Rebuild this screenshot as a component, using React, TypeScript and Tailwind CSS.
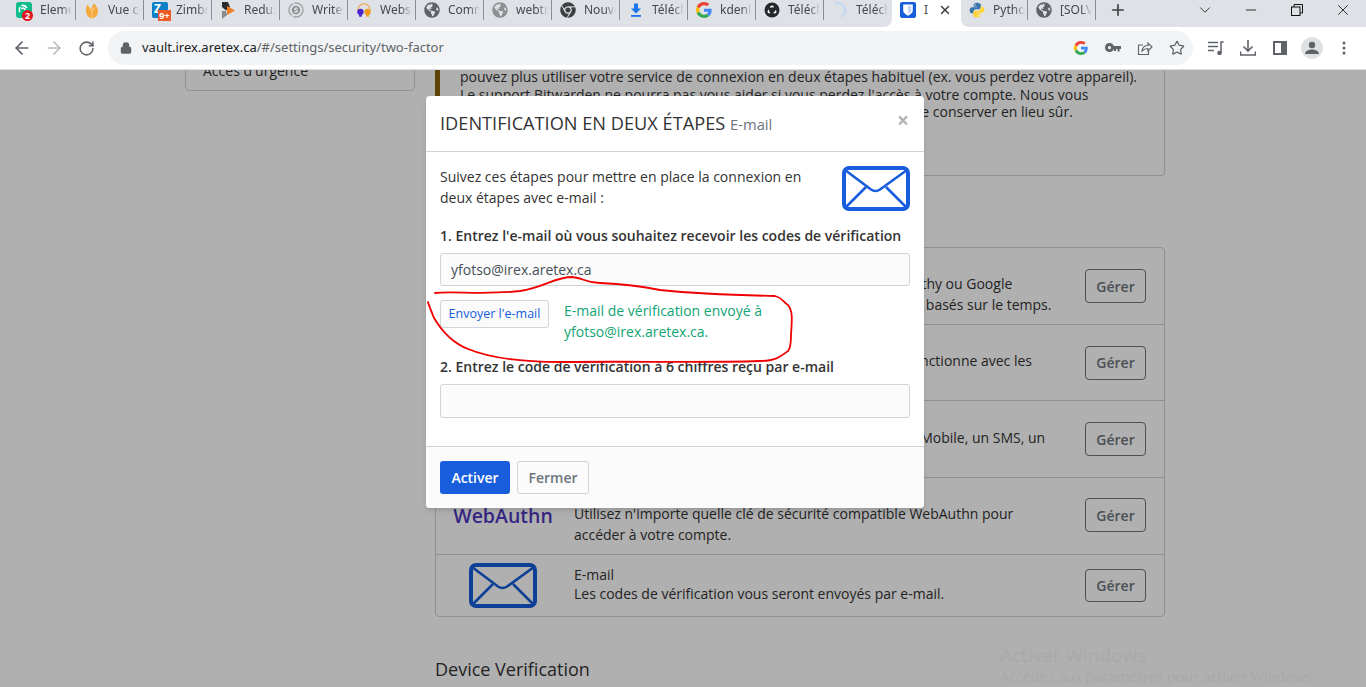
import React from 'react';
import { ArrowLeft, ArrowRight, RotateCw, Lock, Star, ChevronDown, Minus, X, Plus } from 'lucide-react';
import { FaGlobeAmericas, FaChrome } from 'react-icons/fa';

const GoogleG = ({ size = 16 }: { size?: number }) => (
  <svg width={size} height={size} viewBox="0 0 48 48">
    <path fill="#EA4335" d="M24 9.5c3.54 0 6.71 1.22 9.21 3.6l6.85-6.85C35.9 2.38 30.47 0 24 0 14.62 0 6.51 5.38 2.56 13.22l7.98 6.19C12.43 13.72 17.74 9.5 24 9.5z" />
    <path fill="#4285F4" d="M46.98 24.55c0-1.57-.15-3.09-.38-4.55H24v9.02h12.94c-.58 2.96-2.26 5.48-4.78 7.18l7.73 6c4.51-4.18 7.09-10.36 7.09-17.65z" />
    <path fill="#FBBC05" d="M10.53 28.59c-.48-1.45-.76-2.99-.76-4.59s.27-3.14.76-4.59l-7.98-6.19C.92 16.46 0 20.12 0 24c0 3.88.92 7.54 2.56 10.78l7.97-6.19z" />
    <path fill="#34A853" d="M24 48c6.48 0 11.93-2.13 15.89-5.81l-7.73-6c-2.15 1.45-4.92 2.3-8.16 2.3-6.26 0-11.57-4.22-13.47-9.91l-7.98 6.19C6.51 42.62 14.62 48 24 48z" />
  </svg>
);

const ElementIcon = () => (
  <div className="relative w-4 h-4 rounded-[3px] bg-[#0dbd8b]">
    <svg width="16" height="16" viewBox="0 0 16 16" fill="none" stroke="white" strokeWidth="1.6" strokeLinecap="round">
      <path d="M6 3.5a4.5 4.5 0 0 1 4.5 2" />
      <path d="M3.5 9.5a4.5 4.5 0 0 1 .5-4" />
      <path d="M6 6.5a2 2 0 0 1 3 1" />
    </svg>
    <span className="absolute -right-[1px] -bottom-[3px] w-[11px] h-[11px] rounded-full bg-[#e0171f] text-white text-[9px] font-bold leading-[11px] text-center">2</span>
  </div>
);

const VueIcon = () => (
  <svg width="14" height="17" viewBox="0 0 14 17">
    <path fill="#f5a93b" d="M7 16.500C2.500 15.500 1 12 1 8c0-2 .5-4 1.500-5.500C4 4 5 5.500 6 8c.5-2.500 1.500-4.500 3-6.500 2 2 4 4.500 4 7.500 0 4-2 6.500-6 7.500z" />
    <path fill="none" stroke="#fbd59a" strokeWidth=".8" d="M7 16V10M7 10C6.500 8 5 6 3.500 5M7 10c.5-2 2-4 3-5" />
  </svg>
);

const ZimbraIcon = () => (
  <div className="relative w-4 h-4 rounded-[2px] bg-[#0b7fc7] text-white text-[12px] font-bold leading-[14px] pl-[2px]">
    Z
    <span className="absolute -right-[3px] -bottom-[3px] w-[13px] h-[11px] bg-[#ee5a24] text-white text-[9px] font-bold leading-[11px] text-center">9+</span>
  </div>
);

const ReduIcon = () => (
  <svg width="13" height="17" viewBox="0 0 13 17">
    <path fill="#2b2b2b" d="M0 0h6l2 5-4 3.500L0 5z" />
    <path fill="#8a8a8a" d="M0 17V9l4 0 1 4z" />
    <path fill="#ef7d22" d="M5 4l8 4.500L5 13z" />
  </svg>
);

const WriteIcon = () => (
  <svg width="16" height="16" viewBox="0 0 16 16" fill="none">
    <circle cx="8" cy="8" r="7" stroke="#a0a3a6" strokeWidth="1.400" strokeDasharray="14 1.500" />
    <circle cx="8" cy="8" r="4.200" fill="#8d9093" />
    <path d="M9.800 6.500C9 5.700 6.500 5.800 6.500 7s3.200 1 3.200 2.200-2.600 1.200-3.500.4" stroke="white" strokeWidth="1" />
  </svg>
);

const WebsIcon = () => (
  <svg width="18" height="15" viewBox="0 0 18 15">
    <path d="M2 7a4 4 0 0 1 14 0" fill="none" stroke="#f2a33a" strokeWidth="1.200" />
    <circle cx="5" cy="9" r="3.600" fill="#4a22c9" />
    <rect x="3.500" y="11.500" width="3" height="3" fill="#4a22c9" />
    <circle cx="13" cy="9" r="3.600" fill="#f39a1d" />
    <rect x="11.500" y="11.500" width="3" height="3" fill="#f39a1d" />
  </svg>
);

const DownloadBlue = () => (
  <svg width="16" height="16" viewBox="0 0 16 16" fill="#1a73e8">
    <path d="M6 1.500h4v5h3L8 11.500 3 6.500h3z" />
    <rect x="3" y="13" width="10" height="1.800" />
  </svg>
);

const ObsIcon = () => (
  <svg width="16" height="16" viewBox="0 0 16 16">
    <circle cx="8" cy="8" r="7.500" fill="#24272b" />
    <path d="M8 3.500a2 2 0 0 1 2 2c-1.300-.6-2.600-.3-3.600.6A2 2 0 0 1 8 3.500zM3.800 10.500a2 2 0 0 1 1.300-3c-.2 1.400.3 2.600 1.400 3.400a2 2 0 0 1-2.700-.4zM12.300 10.500a2 2 0 0 1-3.300.2c1.300-.4 2.200-1.400 2.400-2.800a2 2 0 0 1 .9 2.600z" fill="white" />
  </svg>
);

const Spinner = () => (
  <svg width="16" height="16" viewBox="0 0 16 16" fill="none">
    <path d="M3 1.500a7 7 0 0 1 6 13.300" stroke="#c3d7f5" strokeWidth="2" />
  </svg>
);

const BitwardenIcon = () => (
  <svg width="16" height="16" viewBox="0 0 16 16">
    <rect width="16" height="16" rx="2" fill="#175ddc" />
    <path d="M3.200 2.500h9.600v6c0 2.500-2.600 4-4.800 5.200C5.800 12.500 3.200 11 3.200 8.500z" fill="white" />
    <path d="M8 4h3.300v4.500c0 1.500-1.700 2.700-3.300 3.500z" fill="#175ddc" opacity=".25" />
  </svg>
);

const PythonIcon = () => (
  <svg width="16" height="16" viewBox="0 0 24 24">
    <path fill="#3776ab" d="M12 1C8 1 7 2.500 7 4.500V7h5.200v1H4.500C2.300 8 1 10 1 12.500S2.300 17 4.500 17H7v-3c0-2 1.500-3.300 3.500-3.300h4.300c1.700 0 3-1.300 3-3V4.500C17.800 2.500 16 1 12 1z" />
    <path fill="#ffd43b" d="M12 23c4 0 5-1.500 5-3.500V17h-5.200v-1h7.700c2.200 0 3.500-2 3.500-4.500S21.700 7 19.500 7H17v3c0 2-1.500 3.300-3.500 3.300H9.200c-1.700 0-3 1.300-3 3v3.200C6.200 21.500 8 23 12 23z" />
    <circle cx="9.300" cy="4.300" r="1" fill="white" />
    <circle cx="14.700" cy="19.700" r="1" fill="white" />
  </svg>
);

const tabs: { icon: React.ReactNode; label: string }[] = [
  { icon: <ElementIcon />, label: 'Element' },
  { icon: <VueIcon />, label: 'Vue core' },
  { icon: <ZimbraIcon />, label: 'Zimbra' },
  { icon: <ReduIcon />, label: 'Redux' },
  { icon: <WriteIcon />, label: 'Writer' },
  { icon: <WebsIcon />, label: 'Websocket' },
  { icon: <FaGlobeAmericas size={16} color="#5f6368" />, label: 'Comment' },
  { icon: <FaGlobeAmericas size={16} color="#8d9093" />, label: 'webtrc' },
  { icon: <FaChrome size={16} color="#3c4043" />, label: 'Nouvel' },
  { icon: <DownloadBlue />, label: 'Télécharger' },
  { icon: <GoogleG />, label: 'kdenlive' },
  { icon: <ObsIcon />, label: 'Télécharger' },
  { icon: <Spinner />, label: 'Télécharger' },
];

const TabItem = ({ icon, label, last }: { icon: React.ReactNode; label: string; last?: boolean }) => (
  <div className={last ? 'bg-white' : ''}>
    <div className={`w-[68px] h-[27px] bg-[#dee1e6] ${last ? 'rounded-br-lg' : ''}`}>
      <div className={`h-5 flex items-center pl-2 ${last ? '' : 'border-r border-[#8a8d91]'}`}>
        <div className="w-4 h-4 flex items-center justify-center shrink-0">{icon}</div>
        <span className="ml-2 w-[32px] overflow-hidden whitespace-nowrap text-[12px] text-[#45494e] [mask-image:linear-gradient(to_right,black_65%,transparent)]">
          {label}
        </span>
      </div>
    </div>
  </div>
);

const ToolBtn = ({ children }: { children: React.ReactNode }) => (
  <div className="w-8 h-8 flex items-center justify-center shrink-0">{children}</div>
);

const ChromeBar = () => (
  <div className="shrink-0 font-['Noto_Sans',sans-serif]">
    {/* Tab strip */}
    <div className="h-[27px] bg-[#dee1e6] flex">
      <div className="w-2 shrink-0" />
      {tabs.map((t, i) => (
        <TabItem key={i} icon={t.icon} label={t.label} last={i === tabs.length - 1} />
      ))}
      <div className="w-[69px] h-[27px] bg-white flex items-start pt-[2px] pl-2">
        <div className="h-4 flex items-center">
          <BitwardenIcon />
          <span className="ml-2 w-[5px] overflow-hidden text-[12px] text-[#45494e]">I</span>
          <X size={14} strokeWidth={2.500} className="ml-[9px] text-[#3c4043]" />
        </div>
      </div>
      <div className="bg-white">
        <div className="w-[67px] h-[27px] bg-[#dee1e6] rounded-bl-lg">
          <div className="h-5 flex items-center pl-2 border-r border-[#8a8d91]">
            <div className="w-4 h-4 shrink-0"><PythonIcon /></div>
            <span className="ml-2 w-[32px] overflow-hidden whitespace-nowrap text-[12px] text-[#45494e] [mask-image:linear-gradient(to_right,black_65%,transparent)]">Python</span>
          </div>
        </div>
      </div>
      <TabItem icon={<FaGlobeAmericas size={16} color="#5f6368" />} label="[SOLVED]" />
      <div className="w-[44px] h-5 flex items-center justify-center">
        <Plus size={18} strokeWidth={2.200} className="text-[#3c4043]" />
      </div>
      <div className="ml-auto flex h-5">
        <div className="w-[46px] flex items-center justify-center"><ChevronDown size={18} strokeWidth={1.100} className="text-[#111]" /></div>
        <div className="w-[46px] flex items-center justify-center"><Minus size={16} strokeWidth={1.300} className="text-[#111]" /></div>
        <div className="w-[46px] flex items-center justify-center">
          <svg width="12" height="12" viewBox="0 0 12 12" fill="none" stroke="#111" strokeWidth="1">
            <rect x=".5" y="3" width="8.500" height="8.500" />
            <path d="M3 3V.5h8.500V9H9" />
          </svg>
        </div>
        <div className="w-[46px] flex items-center justify-center"><X size={18} strokeWidth={1.100} className="text-[#111]" /></div>
      </div>
    </div>
    {/* Toolbar */}
    <div className="h-[43px] bg-white border-b border-[#dadce0] flex items-center pl-[6px]">
      <ToolBtn><ArrowLeft size={20} strokeWidth={2} className="text-[#5f6368]" /></ToolBtn>
      <ToolBtn><ArrowRight size={20} strokeWidth={2} className="text-[#babcbe]" /></ToolBtn>
      <ToolBtn><RotateCw size={17} strokeWidth={2.200} className="text-[#5f6368]" /></ToolBtn>
      <div className="ml-[6px] w-[1085px] h-[34px] rounded-full bg-[#f1f3f4] flex items-center">
        <Lock size={12} strokeWidth={3} className="ml-3 text-[#5f6368] fill-[#5f6368]" />
        <span className="ml-[10px] text-[13px] text-[#202124] whitespace-nowrap">
          vault.irex.aretex.ca<span className="text-[#5f6368]">/#/settings/security/two-factor</span>
        </span>
        <div className="ml-auto flex items-center">
          <ToolBtn><GoogleG size={14} /></ToolBtn>
          <ToolBtn>
            <svg width="16" height="10" viewBox="0 0 16 10" fill="#5f6368">
              <path d="M4.500 0a4.500 4.500 0 0 1 4.300 3H16v3h-1.500v2.500h-2V6H11v2H9V6h-.2A4.500 4.500 0 1 1 4.500 0zm0 3a1.600 1.600 0 1 0 0 3.200 1.600 1.600 0 0 0 0-3.200z" />
            </svg>
          </ToolBtn>
          <ToolBtn>
            <svg width="16" height="16" viewBox="0 0 16 16" fill="none" stroke="#5f6368" strokeWidth="1.100">
              <path d="M6 5H1.500v9.500h10V11" />
              <path d="M5 11c.5-3.500 3-5.500 6-5.500V3l4 4-4 4V8.500c-2.500 0-4.500 1-6 2.500z" />
            </svg>
          </ToolBtn>
          <ToolBtn><Star size={16} strokeWidth={1.800} className="text-[#5f6368]" /></ToolBtn>
        </div>
      </div>
      <div className="ml-[7px] flex items-center">
        <ToolBtn>
          <svg width="16" height="14" viewBox="0 0 16 14" fill="none" stroke="#5f6368" strokeWidth="1.500">
            <path d="M0 1.500h10M0 5.500h10M0 9.500h6" />
            <path d="M13 12V1h2.500" />
            <circle cx="11.500" cy="12" r="1.500" fill="#5f6368" />
          </svg>
        </ToolBtn>
        <ToolBtn>
          <svg width="16" height="16" viewBox="0 0 16 16" fill="none" stroke="#5f6368" strokeWidth="1.600">
            <path d="M8 0v11M3.500 6.500 8 11l4.500-4.500" />
            <path d="M.5 11.500v3.500h15v-3.500" />
          </svg>
        </ToolBtn>
        <ToolBtn>
          <svg width="14" height="14" viewBox="0 0 14 14">
            <path fill="#5f6368" d="M0 0h14v14H0z" />
            <path fill="white" d="M2 2h6v10H2z" />
          </svg>
        </ToolBtn>
        <ToolBtn>
          <div className="w-[22px] h-[22px] rounded-full bg-[#dfe1e5] flex items-center justify-center">
            <svg width="14" height="14" viewBox="0 0 14 14" fill="#5f6368">
              <circle cx="7" cy="4" r="3.200" />
              <path d="M0 13c0-3 3.500-4.500 7-4.500s7 1.500 7 4.500z" />
            </svg>
          </div>
        </ToolBtn>
        <ToolBtn>
          <svg width="4" height="14" viewBox="0 0 4 14" fill="#5f6368">
            <circle cx="2" cy="2" r="1.500" />
            <circle cx="2" cy="7" r="1.500" />
            <circle cx="2" cy="12" r="1.500" />
          </svg>
        </ToolBtn>
      </div>
    </div>
  </div>
);

const EnvelopeIcon = () => (
  <svg width="68" height="45" viewBox="0 0 68 45" fill="none" stroke="#175ddc">
    <rect x="2" y="2" width="64" height="41" rx="5" strokeWidth="4" />
    <path d="M3 4l26 19.500c3 2 6 2 9 0L65 4" strokeWidth="2.600" />
    <path d="M3 42l21-21M65 42 44 21" strokeWidth="2.600" />
  </svg>
);

const rows: { h: string; icon: React.ReactNode; lines: string[]; leading: string; shift: string; btn: string }[] = [
  {
    h: 'h-[76px]',
    icon: null,
    leading: 'leading-[21px]',
    shift: '-mt-[6px]',
    btn: 'h-[34px]',
    lines: ['Application d\'authentification', 'Utilisez une application d\'authentification (comme Authy ou Google', 'Authenticator) pour générer des codes de vérification basés sur le temps.'],
  },
  {
    h: 'h-[76px]',
    icon: null,
    leading: 'leading-[21px]',
    shift: '-mt-[5px]',
    btn: 'h-[34px]',
    lines: ['YubiKey OTP', 'Utilisez une YubiKey pour accéder à votre compte. Fonctionne avec les', 'appareils YubiKey 4, 4 Nano, 4C et NEO.'],
  },
  {
    h: 'h-[77px]',
    icon: null,
    leading: 'leading-[21px]',
    shift: '-mt-[3px]',
    btn: 'h-[34px]',
    lines: ['Duo', 'Utilisez Duo Security pour noter via l\'application Duo Mobile, un SMS, un', 'appel téléphonique ou une clé de sécurité U2F.'],
  },
  {
    h: 'h-[77px]',
    icon: <span className="text-[19.500px] font-semibold text-[#5038c0]">WebAuthn</span>,
    leading: 'leading-[21px]',
    shift: '-mt-[6px]',
    btn: 'h-[34px] -mt-[2px]',
    lines: ['FIDO2 WebAuthn', 'Utilisez n\'importe quelle clé de sécurité compatible WebAuthn pour', 'accéder à votre compte.'],
  },
  {
    h: 'h-[62px]',
    icon: <EnvelopeIcon />,
    leading: 'leading-[19.500px]',
    shift: '-mt-[3px]',
    btn: 'h-[33px] -mt-[1px]',
    lines: ['E-mail', 'Les codes de vérification vous seront envoyés par e-mail.'],
  },
];

const PageBehind = () => (
  <div className="flex pl-[185px] gap-5 -mt-[100px] text-[14px] text-[#333] font-['Open_Sans',sans-serif]">
    {/* Sidebar */}
    <div className="w-[230px] h-[121px] border border-[#ced4da] rounded flex flex-col justify-end shrink-0">
      <div className="h-[39px] pl-[17px] pt-[9px] leading-[21px]">Accès d'urgence</div>
    </div>
    {/* Main */}
    <div className="w-[730px]">
      <div className="h-[206px] border border-[#ced4da] border-l-[5px] border-l-[#86640b] rounded pl-5 pt-[79px] leading-[18px]">
        <div className="whitespace-nowrap">Le code de récupération vous permet d'accéder à votre compte dans le cas où vous ne</div>
        <div className="whitespace-nowrap">pouvez plus utiliser votre service de connexion en deux étapes habituel (ex. vous perdez votre appareil).</div>
        <div className="whitespace-nowrap">Le support Bitwarden ne pourra pas vous aider si vous perdez l'accès à votre compte. Nous vous</div>
        <div className="whitespace-nowrap -mt-[1px]">recommandons de noter ou d'imprimer le code de récupération et de le conserver en lieu sûr.</div>
      </div>
      <div className="h-[71px] flex items-end pb-2 text-[18px]">Fournisseurs</div>
      <div className="border border-[#ced4da] rounded">
        {rows.map((r, i) => (
          <div key={i} className={`${r.h} flex items-center ${i > 0 ? 'border-t border-[#ced4da]' : ''}`}>
            <div className="w-[134px] mr-[4px] flex justify-center shrink-0">{r.icon}</div>
            <div className={`flex-1 ${r.leading} ${r.shift} whitespace-nowrap`}>
              {r.lines.map((l, j) => (
                <div key={j}>{l}</div>
              ))}
            </div>
            <button type="button" className={`w-[61px] ${r.btn} mr-[18px] border border-[#6c757d] rounded text-[14px] font-semibold text-[#6c757d]`}>
              Gérer
            </button>
          </div>
        ))}
      </div>
      <h2 className="mt-[39px] text-[18px] leading-[27px] font-normal">Device Verification</h2>
    </div>
  </div>
);

const Modal = () => (
  <div className="absolute left-[426px] top-[26px] w-[498px] h-[412px] bg-white rounded shadow-md flex flex-col text-[14px] text-[#333] font-['Open_Sans',sans-serif]">
    <div className="h-[56px] border-b border-[#ced4da] flex items-center px-[14px] shrink-0">
      <h1 className="text-[18.200px] font-normal whitespace-nowrap">
        IDENTIFICATION EN DEUX ÉTAPES <small className="text-[14.800px] text-[#6c757d]">E-mail</small>
      </h1>
      <span className="ml-auto mb-[7px] mr-[1px] text-[21px] font-bold leading-none text-[#b3b3b3]">×</span>
    </div>
    <div className="flex-1 px-[14px] pt-[14px]">
      <div className="flex justify-between">
        <p className="w-[380px] leading-[21px]">
          Suivez ces étapes pour mettre en place la connexion en deux étapes avec e-mail :
        </p>
        <EnvelopeIcon />
      </div>
      <label className="block mt-[14px] font-semibold leading-[21px]">
        1. Entrez l'e-mail où vous souhaitez recevoir les codes de vérification
      </label>
      <input
        readOnly
        value="yfotso@irex.aretex.ca"
        className="mt-[7px] w-full h-[33px] px-[10px] bg-[#fbfbfb] border border-[#ced4da] rounded-[3px] text-[14px] text-[#465057]"
      />
      <div className="flex mt-[14px] gap-[15px]">
        <button type="button" className="w-[109px] h-[28px] bg-[#fbfbfb] border border-[#ced4da] rounded-[3px] text-[12.500px] font-medium text-[#175ddc] shrink-0">
          Envoyer l'e-mail
        </button>
        <p className="text-[#10a574] leading-[21px] w-[220px]">
          E-mail de vérification envoyé à yfotso@irex.aretex.ca.
        </p>
      </div>
      <label className="block mt-[14px] font-semibold leading-[21px]">
        2. Entrez le code de vérification à 6 chiffres reçu par e-mail
      </label>
      <input
        readOnly
        className="mt-[7px] w-full h-[34px] px-[10px] bg-[#fbfbfb] border border-[#ced4da] rounded-[3px]"
      />
    </div>
    <div className="h-[62px] bg-[#fbfbfb] border-t border-[#ced4da] rounded-b flex items-center px-[14px] gap-[7px] shrink-0">
      <button type="button" className="w-[70px] h-[33px] bg-[#175ddc] rounded-[3px] text-white font-semibold">Activer</button>
      <button type="button" className="w-[72px] h-[33px] border border-[#ced4da] rounded-[3px] text-[#6c757d] font-semibold">Fermer</button>
    </div>
  </div>
);

// red marker drawn over the screenshot, in window coordinates
const RedMarks = () => (
  <svg className="absolute left-0 -top-[70px] pointer-events-none" width="1366" height="687" fill="none" stroke="#f00000" strokeWidth="1.800" strokeLinecap="round" strokeLinejoin="round">
    <path d="M435 293C450 291 490 295 520 291C545 287 555 277 572 277C585 278 585 283 600 283C620 284 640 286 660 290C690 293 730 295 775 296C783 298 783 302 788 305C793 311 792 320 791 335C791 345 790 349 788 351C780 357 775 361 760 361C700 363 640 361 560 362C520 362 490 358 468 349C450 342 440 328 434 318C431 310 429 306 428 302" />
  </svg>
);

export default function App() {
  return (
    <div className="w-[1366px] h-[687px] overflow-hidden flex flex-col bg-white">
      <ChromeBar />
      <div className="relative flex-1 overflow-hidden">
        <PageBehind />
        <div className="absolute inset-0 bg-black/[0.31]" />
        <Modal />
        <RedMarks />
        <div className="absolute left-[1000px] top-[573px] text-[#a9a9a9] font-['Open_Sans',sans-serif] whitespace-nowrap">
          <div className="text-[19px] leading-[24px]">Activer Windows</div>
          <div className="text-[14.300px] leading-[20px]">Accédez aux paramètres pour activer Windows.</div>
        </div>
      </div>
    </div>
  );
}
